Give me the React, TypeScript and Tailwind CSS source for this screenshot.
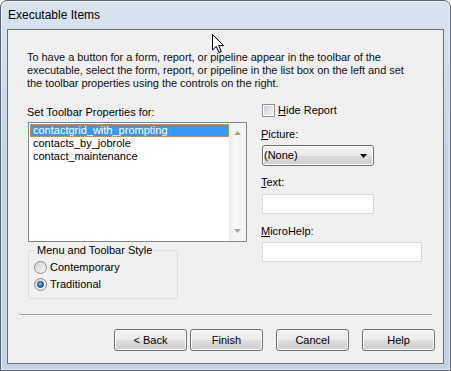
import React from 'react';

/**
 * Executable Items wizard page (Windows 7 basic look)
 */

const items = ['contactgrid_with_prompting', 'contacts_by_jobrole', 'contact_maintenance'];

function WinButton({ children }: { children: React.ReactNode }) {
  return (
    <button className="w-[73px] h-[22px] rounded-[3px] border border-[#707070] bg-[linear-gradient(#f2f2f2_0%,#ebebeb_50%,#dddddd_50%,#cfcfcf_100%)] shadow-[inset_0_0_0_1px_#fbfbfb] text-[11px] text-black leading-none">
      {children}
    </button>
  );
}

function Radio({ checked, label }: { checked?: boolean; label: string }) {
  return (
    <div className="flex items-center h-[17px] gap-[3px]">
      <div className="w-[13px] h-[13px] rounded-full border border-[#8e8f8f] bg-[linear-gradient(135deg,#d4d4d4,#f8f8f8)] flex items-center justify-center">
        {checked && (
          <div className="w-[7px] h-[7px] rounded-full bg-[radial-gradient(circle_at_40%_35%,#7fd0ff,#1c6fb8_60%,#0d3f75)] border border-[#1a3f66]" />
        )}
      </div>
      <span>{label}</span>
    </div>
  );
}

function Label({ k, rest }: { k: string; rest: string }) {
  return (
    <div className="h-[13px] leading-[13px]">
      <span className="underline underline-offset-[1px]">{k}</span>
      {rest}
    </div>
  );
}

export default function App() {
  return (
    <div className="relative w-[451px] h-[371px] font-['Liberation_Sans',Arial,sans-serif] text-[11px] text-black">
      <div className="h-full flex flex-col rounded-t-[7px] border border-[#5a6470] bg-[linear-gradient(#d9e4f0,#c6d5e5_40%,#c4d3e4)] shadow-[inset_0_0_0_1px_rgba(255,255,255,0.55)] px-[6px] pb-[6px]">
        {/* Title bar */}
        <div className="h-[28px] flex items-center pl-[1px] text-[12px] text-black">Executable Items</div>

        {/* Client area */}
        <div className="flex-1 flex flex-col border border-[#6e6e6e] bg-[#f0f0f0]">
          <p className="pt-[21px] pl-[19px] leading-[13px] whitespace-nowrap text-[#111] tracking-[-0.05px]">
            To have a button for a form, report, or pipeline appear in the toolbar of the
            <br />
            executable, select the form, report, or pipeline in the list box on the left and set
            <br />
            the toolbar properties using the controls on the right.
          </p>

          <div className="flex mt-[14px] pl-[19px]">
            {/* Left column */}
            <div className="w-[234px] flex flex-col">
              <div className="h-[13px] leading-[13px] mt-[2px] mb-[3px]">Set Toolbar Properties for:</div>
              <div className="ml-[1px] w-[219px] h-[120px] border border-[#828790] bg-white flex">
                <div className="flex-1 pt-[1px] pl-[1px]">
                  {items.map((item, i) => (
                    <div
                      key={item}
                      className={
                        i === 0
                          ? 'h-[13px] leading-[11px] pl-[2px] bg-[#3399ff] text-white border border-dotted border-[#d9a060]'
                          : 'h-[13px] leading-[13px] pl-[3px]'
                      }
                    >
                      {item}
                    </div>
                  ))}
                </div>
                <div className="w-[17px] bg-[linear-gradient(90deg,#eaeaea,#f7f7f7_30%,#f4f4f4)] flex flex-col justify-between items-center py-[8px]">
                  <svg width="7" height="4" viewBox="0 0 7 4">
                    <path d="M0 4 L3.5 0 L7 4 Z" fill="#a3a3a3" />
                  </svg>
                  <svg width="7" height="4" viewBox="0 0 7 4">
                    <path d="M0 0 L3.5 4 L7 0 Z" fill="#a3a3a3" />
                  </svg>
                </div>
              </div>

              <fieldset className="ml-[1px] mt-[2px] w-[150px] border border-[#d5dfe5] rounded-[3px] pl-[5px] pt-[2px] pb-[5px]">
                <legend className="ml-[1px] px-[2px] leading-[13px]">Menu and Toolbar Style</legend>
                <Radio label="Contemporary" />
                <Radio label="Traditional" checked />
              </fieldset>
            </div>

            {/* Right column */}
            <div className="flex flex-col">
              <div className="flex items-center h-[13px] gap-[3px] ml-[1px]">
                <div className="w-[13px] h-[13px] border border-[#8e8f8f] bg-white p-[1px]">
                  <div className="w-full h-full bg-[linear-gradient(135deg,#cbcfd5,#f2f3f5)]" />
                </div>
                <Label k="H" rest="ide Report" />
              </div>

              <div className="mt-[11px]">
                <Label k="P" rest="icture:" />
              </div>
              <div className="mt-[4px] ml-[1px] w-[112px] h-[21px] rounded-[3px] border border-[#707070] bg-[linear-gradient(#f2f2f2_0%,#ebebeb_50%,#dddddd_50%,#cfcfcf_100%)] shadow-[inset_0_0_0_1px_#fbfbfb] flex items-center justify-between pl-[1px] pr-[6px]">
                <span>(None)</span>
                <svg width="7" height="4" viewBox="0 0 7 4">
                  <path d="M0 0 L3.5 4 L7 0 Z" fill="#000" />
                </svg>
              </div>

              <div className="mt-[10px]">
                <Label k="T" rest="ext:" />
              </div>
              <div className="mt-[5px] ml-[1px] w-[112px] h-[20px] border border-[#dadada] bg-white" />

              <div className="mt-[11px]">
                <Label k="M" rest="icroHelp:" />
              </div>
              <div className="mt-[4px] ml-[1px] w-[160px] h-[20px] border border-[#dadada] bg-white" />
            </div>
          </div>

          {/* Separator */}
          <div className="mt-[15px] mx-[11px] border-t border-[#a0a0a0] border-b border-b-white" />

          {/* Buttons */}
          <div className="mt-[13px] flex justify-end pr-[8px]">
            <div className="flex gap-[3px]">
              <WinButton>&lt; Back</WinButton>
              <WinButton>Finish</WinButton>
            </div>
            <div className="ml-[13px] flex gap-[13px]">
              <WinButton>Cancel</WinButton>
              <WinButton>Help</WinButton>
            </div>
          </div>
        </div>
      </div>

      {/* Mouse pointer */}
      <svg className="absolute left-[212px] top-[34px]" width="13" height="20" viewBox="0 0 13 20">
        <path d="M0.5 0.5 L0.5 16 L4.3 12.4 L7 18.6 L9.3 17.6 L6.7 11.6 L11.7 11.6 Z" fill="#fff" stroke="#000" strokeWidth="1" strokeLinejoin="miter" />
      </svg>
    </div>
  );
}
